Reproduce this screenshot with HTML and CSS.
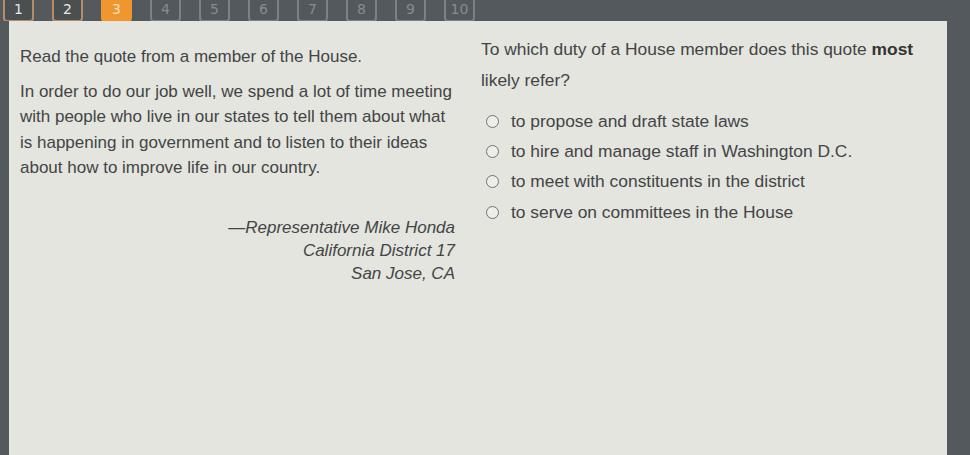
FILE: index.html
```html
<!DOCTYPE html>
<html>
<head>
<meta charset="utf-8">
<link rel="stylesheet" href="styles.css">
</head>
<body>
<div class="tabs">
  <div class="tab done">1</div>
  <div class="tab done">2</div>
  <div class="tab current">3</div>
  <div class="tab">4</div>
  <div class="tab">5</div>
  <div class="tab">6</div>
  <div class="tab">7</div>
  <div class="tab">8</div>
  <div class="tab">9</div>
  <div class="tab">10</div>
</div>
<div class="panel">
  <div class="left">
    <p class="intro">Read the quote from a member of the House.</p>
    <p class="quote">In order to do our job well, we spend a lot of time meeting with people who live in our states to tell them about what is happening in government and to listen to their ideas about how to improve life in our country.</p>
    <div class="attrib">
      <div>—Representative Mike Honda</div>
      <div>California District 17</div>
      <div>San Jose, CA</div>
    </div>
  </div>
  <div class="right">
    <p class="question">To which duty of a House member does this quote <b>most</b> likely refer?</p>
    <ul class="options">
      <li class="option"><span class="radio"></span>to propose and draft state laws</li>
      <li class="option"><span class="radio"></span>to hire and manage staff in Washington D.C.</li>
      <li class="option"><span class="radio"></span>to meet with constituents in the district</li>
      <li class="option"><span class="radio"></span>to serve on committees in the House</li>
    </ul>
  </div>
</div>
</body>
</html>
```
FILE: styles.css
```css
html, body {
  margin: 0;
  padding: 0;
  height: 100%;
  overflow: hidden;
}
body {
  background: #53595c;
  font-family: "Liberation Sans", Arial, sans-serif;
  color: #424446;
}
.tabs {
  display: flex;
  gap: 18px;
  padding-left: 3px;
  height: 21px;
  overflow: hidden;
}
.tab {
  flex: 0 0 auto;
  width: 27px;
  height: 28px;
  margin-top: -10px;
  border: 2px solid #7b8185;
  border-radius: 4px;
  box-sizing: content-box;
  display: flex;
  align-items: flex-end;
  justify-content: center;
  font-family: "DejaVu Sans", sans-serif;
  font-size: 14px;
  line-height: 22px;
  color: #868c90;
  background: #52585b;
}
.tab.done {
  border-color: #b98a66;
  color: #e8e8e8;
  background: #4a4f52;
}
.tab.current {
  border-color: #f0962e;
  background: #f0962e;
  color: #fbe0bf;
}
.panel {
  margin-left: 9px;
  width: 938px;
  height: 440px;
  background: #e5e5df;
  display: grid;
  grid-template-columns: 461px 1fr;
  box-sizing: border-box;
  padding-left: 11px;
}
.left {
  font-size: 17px;
}
.intro {
  margin: 24px 0 0;
  line-height: 24px;
}
.quote {
  margin: 10px 0 0;
  line-height: 25.3px;
  width: 437px;
}
.attrib {
  margin-top: 36px;
  width: 435px;
  text-align: right;
  font-style: italic;
  line-height: 23px;
}
.right {
  font-size: 17.4px;
}
.question {
  margin: 13px 0 0;
  line-height: 31px;
  width: 450px;
}
.question b {
  color: #333;
}
.options {
  list-style: none;
  margin: 10px 0 0;
  padding: 0;
}
.option {
  display: flex;
  align-items: center;
  height: 30.3px;
}
.radio {
  width: 11px;
  height: 11px;
  border: 1.6px solid #707274;
  border-radius: 50%;
  margin-left: 5px;
  margin-right: 12px;
  background: #eeeee9;
}
```
